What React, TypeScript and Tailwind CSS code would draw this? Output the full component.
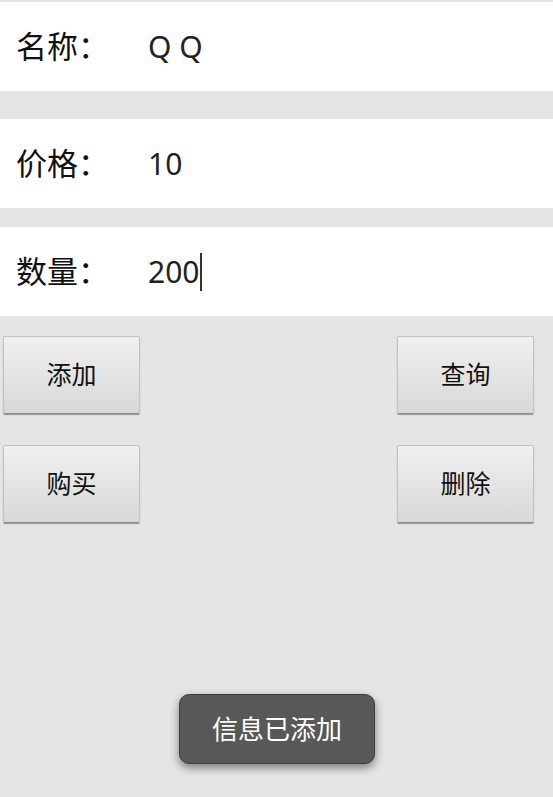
import React from 'react';

const font = { fontFamily: '"Noto Sans", "Noto Sans CJK SC", sans-serif' };

function Row({ label, value, caret }: { label: string; value: string; caret?: boolean }) {
  return (
    <div className="flex items-center h-[89px] bg-white">
      <div className="w-[148px] pl-[16px] text-[31px] text-[#111]">{label}</div>
      <div className="flex items-center text-[30px] text-[#222]">
        <span>{value}</span>
        {caret && <span className="ml-[1px] w-[2px] h-[38px] bg-[#333]"></span>}
      </div>
    </div>
  );
}

function Btn({ label }: { label: string }) {
  return (
    <button className="w-[137px] h-[78px] rounded-[2px] border border-[#c2c2c2] border-b-[#8a8a8a] bg-gradient-to-b from-[#f0f0f0] to-[#d8d8d8] shadow-[0_1px_1px_rgba(0,0,0,0.35)] text-[25px] text-[#111]">
      {label}
    </button>
  );
}

export default function App() {
  return (
    <div className="w-[553px] h-[797px] bg-[#e5e5e5] flex flex-col pt-[2px] relative" style={font}>
      <Row label="名称：" value="Q Q" />
      <div className="h-[28px]"></div>
      <Row label="价格：" value="10" />
      <div className="h-[19px]"></div>
      <Row label="数量：" value="200" caret />

      <div className="flex justify-between px-[3px] pr-[19px] mt-[20px]">
        <Btn label="添加" />
        <Btn label="查询" />
      </div>
      <div className="flex justify-between px-[3px] pr-[19px] mt-[31px]">
        <Btn label="购买" />
        <Btn label="删除" />
      </div>

      <div className="flex-1 flex items-end justify-center pb-[33px]">
        <div className="ml-[1px] w-[196px] h-[70px] rounded-[10px] bg-[#585858] border border-[#3e3e3e] shadow-[0_4px_10px_rgba(0,0,0,0.45)] flex items-center justify-center text-white text-[26px]">
          信息已添加
        </div>
      </div>
    </div>
  );
}
